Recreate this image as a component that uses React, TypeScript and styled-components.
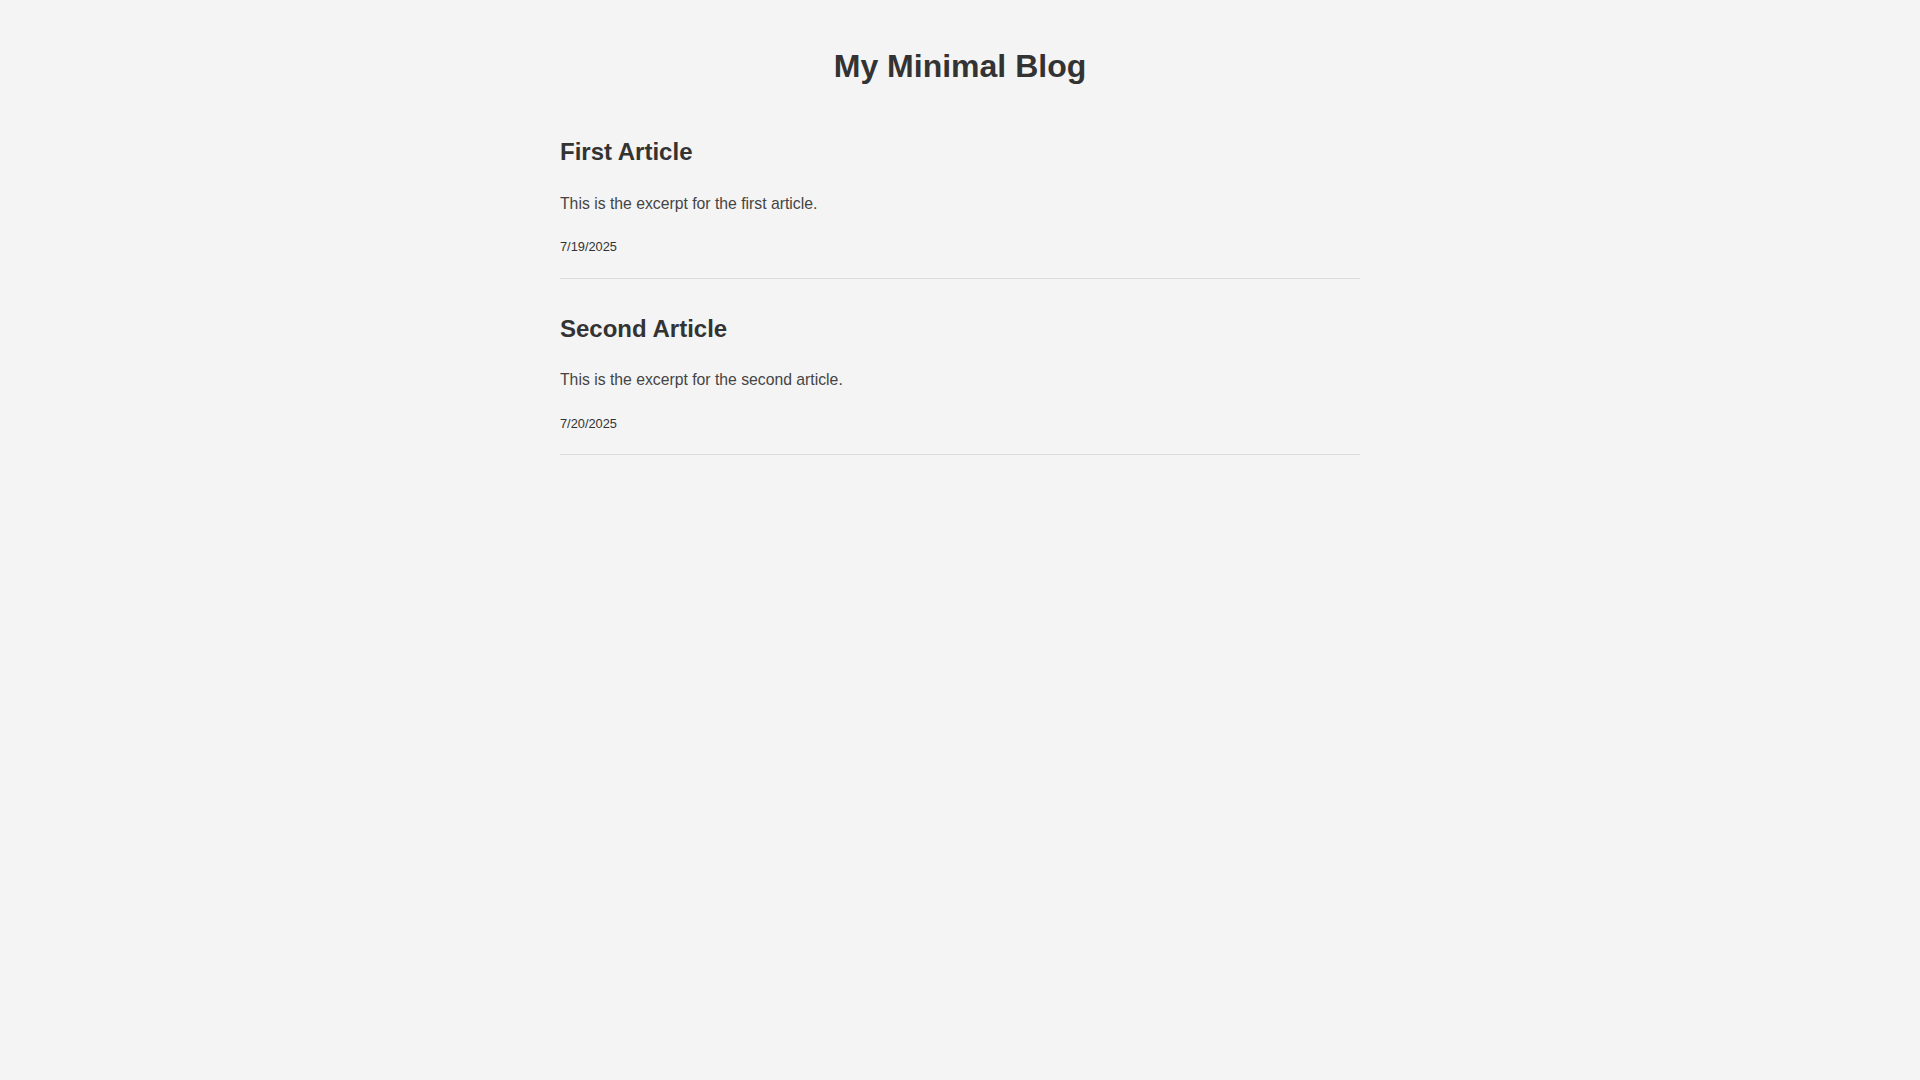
import React from "react";
import styled, { createGlobalStyle } from "styled-components";

const GlobalStyle = createGlobalStyle`
  html, body {
    margin: 0;
    padding: 0;
    background: #f4f4f4;
  }
  body {
    font-family: "Liberation Sans", Arial, Helvetica, sans-serif;
    color: #333;
    line-height: 1.6;
  }
`;

const Container = styled.main`
  max-width: 800px;
  margin: 0 auto;
  padding: 41px 0 40px;
`;

const Title = styled.h1`
  font-size: 32px;
  font-weight: bold;
  text-align: center;
  margin: 0 0 41px;
  line-height: 1.6;
`;

const Article = styled.article`
  padding-bottom: 19px;
  border-bottom: 1px solid #ddd;
  margin-bottom: 31px;
`;

const ArticleTitle = styled.h2`
  font-size: 24px;
  font-weight: bold;
  margin: 0 0 19px;
  line-height: 1.6;
`;

const Excerpt = styled.p`
  font-size: 15.75px;
  line-height: 25.6px;
  margin: 0;
  color: #444;
`;

const DateLine = styled.div`
  margin-top: 17px;
  font-size: 16px;
`;

const DateText = styled.small`
  font-size: 12.8px;
  color: #333;
`;

const posts = [
  { title: "First Article", excerpt: "This is the excerpt for the first article.", date: "7/19/2025" },
  { title: "Second Article", excerpt: "This is the excerpt for the second article.", date: "7/20/2025" },
];

export default function App() {
  return (
    <>
      <GlobalStyle />
      <Container>
        <Title>My Minimal Blog</Title>
        {posts.map((p) => (
          <Article key={p.title}>
            <ArticleTitle>{p.title}</ArticleTitle>
            <Excerpt>{p.excerpt}</Excerpt>
            <DateLine>
              <DateText>{p.date}</DateText>
            </DateLine>
          </Article>
        ))}
      </Container>
    </>
  );
}
